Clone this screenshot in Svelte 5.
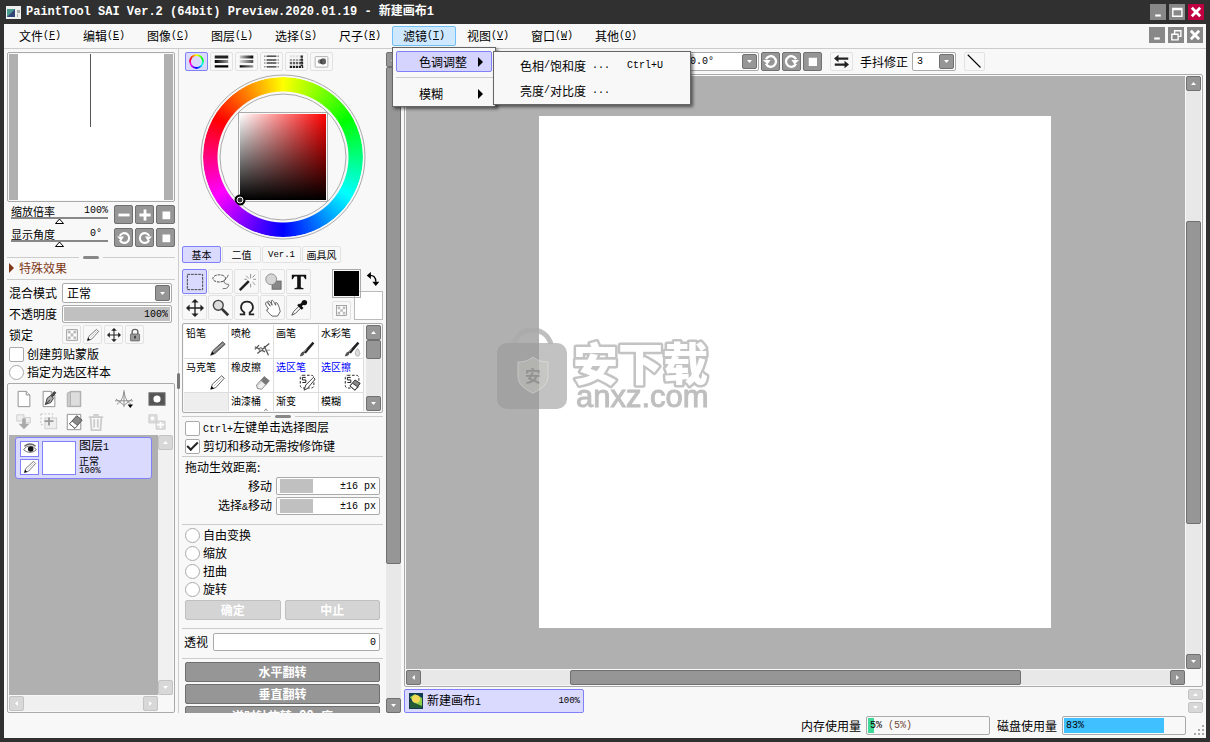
<script lang="ts">
	type Tool = { name: string; icon: string };

	const menus = [
		['文件', 'F'],
		['编辑', 'E'],
		['图像', 'C'],
		['图层', 'L'],
		['选择', 'S'],
		['尺子', 'R'],
		['滤镜', 'T'],
		['视图', 'V'],
		['窗口', 'W'],
		['其他', 'O']
	];
	const openMenu = '滤镜';

	const colorModes = ['wheel', 'bars', 'mixers', 'lines', 'dots', 'scratch'];
	const tabs = ['基本', '二值', 'Ver.1', '画具风'];
	const tools = ['marquee', 'lasso', 'wand', 'shape', 'text', 'move', 'zoom', 'rotate', 'hand', 'dropper'];
	const locks = ['checker', 'pencil', 'move', 'lock'];

	const brushes: Tool[] = [
		{ name: '铅笔', icon: 'crayon' },
		{ name: '喷枪', icon: 'airbrush' },
		{ name: '画笔', icon: 'brush' },
		{ name: '水彩笔', icon: 'watercolor' },
		{ name: '马克笔', icon: 'marker' },
		{ name: '橡皮擦', icon: 'eraser' },
		{ name: '选区笔', icon: 'selpen' },
		{ name: '选区擦', icon: 'seleraser' },
		{ name: '', icon: '' },
		{ name: '油漆桶', icon: 'bucket' },
		{ name: '渐变', icon: '' },
		{ name: '模糊', icon: 'drop' }
	];

	const transforms = ['自由变换', '缩放', '扭曲', '旋转'];
	const flips = ['水平翻转', '垂直翻转', '逆时针旋转 90 度'];

	// all icons are drawn on a 20x20 grid
	const selBox = '<rect x="1.5" y="1.5" width="16" height="15" rx="3" fill="none" stroke="#000" stroke-dasharray="3 2"/><path d="M8 4H4v3h4v3H4" fill="none" stroke="#000"/>';
	const pen = '<path d="M2 18l2-6L15 2l3 3L8 16z" fill="#fff" stroke="#444"/><path d="M2 18l1-4 3 3z"/><path d="M6 14l10-10" stroke="#bbb"/>';
	const ers = '<path d="M3 13L12 3l6 5-9 10-5-1z" fill="#eee" stroke="#777"/><path d="M8 8l4-5 6 5-4 5z" fill="#777"/><path d="M4 14l6-6" stroke="#bbb"/>';
	const page = '<path d="M3.500 1.500h9l4 4v13h-13z" fill="#fff" stroke="#888"/><path d="M12.500 1.500v4h4" fill="#eee" stroke="#888"/>';
	const brushShape = '<path d="M1 19c1-4 3-6 5-5 1 3-1 5-5 5z" fill="#555"/><path d="M5 14L16 2l2 2L8 16z" fill="#222"/><path d="M6 14l3-3" stroke="#aaa"/>';
	const icons: Record<string, string> = {
		wheel: '',
		bars: '<rect x="1" y="2" width="18" height="4" fill="#222"/><rect x="1" y="8" width="18" height="4" fill="url(#fade)"/><rect x="1" y="15" width="18" height="3" fill="#000"/>',
		mixers: '<rect x="1" y="2" width="18" height="4" fill="url(#unfade)"/><rect x="1" y="8" width="18" height="4" fill="url(#unfade)" opacity=".7"/><rect x="1" y="15" width="18" height="3" fill="url(#fade)"/>',
		lines: '<g stroke="#555" stroke-width="2"><path d="M0 3h20M0 8h20M0 12h20M0 17h20" stroke-dasharray="2 1" opacity=".6"/><path d="M4 3h12M4 8h12M4 12h12M4 17h12"/></g>',
		dots: '<g stroke="#222" stroke-width="3" stroke-dasharray="3 1"><path d="M1 3h18" opacity=".1"/><path d="M1 8h18" opacity=".4"/><path d="M1 12h18" opacity=".7"/><path d="M1 17h18"/><path d="M17 2v14"/></g>',
		scratch: '<rect x="1.500" y="3.500" width="17" height="14" rx="1" fill="#fff" stroke="#999"/><circle cx="8" cy="10" r="3" fill="#888"/><circle cx="12" cy="10" r="4" fill="#444"/><path d="M11 6h5v7h-5z" fill="#777" opacity=".5"/>',
		marquee: '<rect x="1.500" y="1.500" width="17" height="17" fill="none" stroke="#333" stroke-dasharray="3 1"/>',
		lasso: '<ellipse cx="8" cy="6" rx="7" ry="4" fill="none" stroke="#333" stroke-dasharray="3 1"/><path d="M18 2c-1 5-7 6-4 9s6 0 4 4-6 1-6 3" fill="none" stroke="#555"/>',
		wand: '<path d="M1 18L11 8l2 2L3 20z" fill="#222"/><path d="M14 1v5M14 12v4M7 7h3M17 7h3M9 3l3 3M19 2l-3 3M16 10l3 3" stroke="#888"/>',
		shape: '<rect x="9" y="9" width="10" height="9" fill="#888" stroke="#666"/><circle cx="8" cy="7" r="6" fill="#d5d5d5" stroke="#888"/>',
		text: '<path d="M2 2h16v5h-1l-2-3h-3v12l3 1v1H5v-1l3-1V4H5L3 7H2z" fill="#111"/>',
		move: '<path d="M10 2v16M2 10h16" stroke="#222" stroke-width="1.500"/><path d="M10 0l4 4H6zM10 20l4-4H6zM0 10l4-4v8zM20 10l-4-4v8z" fill="#222"/>',
		zoom: '<circle cx="7" cy="7" r="5.500" fill="#ddd" stroke="#444" stroke-width="1.500"/><path d="M11 11l7 7" stroke="#333" stroke-width="3"/>',
		rotate: '<path d="M2 17h5v-2C1 11 3 3 10 3s9 8 3 12v2h5" fill="none" stroke="#222" stroke-width="2"/>',
		hand: '<path d="M2 4c2-2 4 4 5 4L4 3c1-2 3 0 5 4L8 2c2-2 3 2 5 5V4c2-1 4 5 5 10l-3 5H9c-3-3-6-5-6-7l2-1c-2-3-4-5-3-7z" fill="#fff" stroke="#555"/>',
		dropper: '<path d="M2 18l2-4 7-7 2 2-7 7z" fill="#fff" stroke="#444"/><path d="M9 6l5 5M12 7l4-4" stroke="#111" stroke-width="3"/><circle cx="16" cy="4" r="3" fill="#111"/>',
		checker: '<rect x="2.500" y="2.500" width="15" height="15" fill="#fff" stroke="#777"/><path d="M4 4h4v4H4zM12 4h4v4h-4zM8 8h4v4H8zM4 12h4v4H4zM12 12h4v4h-4z" fill="#bbb"/>',
		pencil: pen,
		marker: pen,
		crayon: '<path d="M2 18l2-5L16 2l3 3L7 16z" fill="#777" stroke="#444"/><path d="M5 14L17 4" stroke="#ccc"/><path d="M2 18l2-4 2 2z" fill="#000"/>',
		lock: '<path d="M6 9V5c0-4 8-4 8 0v4" fill="none" stroke="#666" stroke-width="2"/><rect x="3.500" y="8.500" width="13" height="10" rx="1" fill="#999" stroke="#555"/><path d="M10 11v4" stroke="#222" stroke-width="2"/>',
		airbrush: '<path d="M1 8l12 6M4 16L18 4M1 11l5-5M12 7l5 11" fill="none" stroke="#555" stroke-width="1.500"/><circle cx="8" cy="11" r="2" fill="#ccc" stroke="#555"/><path d="M13 12h6" stroke="#888"/>',
		brush: brushShape,
		watercolor: brushShape + '<path d="M16 10c4 5 3 9 0 9s-4-4 0-9z" fill="#ddd" stroke="#aaa"/>',
		eraser: ers,
		selpen: selBox + '<path d="M6 19l2-6 9-9 2 2-9 11z" fill="#fff" stroke="#222"/>',
		seleraser: selBox + '<path d="M7 14l6-7 6 4-6 8z" fill="#888" stroke="#222"/><path d="M7 14l3-3 6 4-3 4z" fill="#fff" stroke="#222"/>',
		bucket: '<path d="M11 5l3-4 3 4" fill="none" stroke="#777"/>',
		drop: '<path d="M14 3l2 4h-4z" fill="#ccc"/>',
		newlayer: page,
		newpen: page + '<path d="M6 16l2-7 4-3 3 3-3 5z" fill="#aaa" stroke="#333"/><path d="M13 7l4-5" stroke="#444" stroke-width="3"/><path d="M6 16l5-5" stroke="#222"/>',
		folder: '<path d="M2.500 3.500l4-2h11v17h-15z" fill="#ccc" stroke="#aaa"/><path d="M6 2h11v16H6z" fill="#ddd" stroke="#aaa"/>',
		ruler: '<path d="M10 0v19M0 12h20M2 16C7 13 9 8 10 2c1 6 3 11 8 14M1 10l9 7 9-7" fill="none" stroke="#888"/><path d="M14 16h6l-3 4z"/>',
		mask: '<rect x="1" y="3" width="18" height="14" fill="#555" stroke="#777"/><circle cx="10" cy="10" r="4" fill="#fff"/>',
		merge: '<path d="M2 2h8v7H2zM10 5h7v6h-7z" fill="#eee" stroke="#ccc"/><path d="M8 6h4v6h4l-6 6-6-6h4z" fill="#aaa"/>',
		duplicate: '<rect x="1" y="1" width="13" height="12" fill="none" stroke="#bbb" stroke-dasharray="2 2"/><rect x="5.500" y="5.500" width="13" height="12" fill="#eee" stroke="#ccc"/><path d="M10 5v9M5 9h10" stroke="#999" stroke-width="2"/>',
		clear: '<path d="M2.500 1.500h15v17h-15z" fill="#fff" stroke="#888"/><path d="M5 12l8-9 6 5-8 9z" fill="#888" stroke="#444"/><path d="M5 12l3-3 6 5-3 3z" fill="#fff" stroke="#555"/>',
		trash: '<path d="M2 4.500h16M8 4V2h4v2M4 5l1 14h10l1-14M8 7v9M12 7v9" fill="none" stroke="#ccc" stroke-width="2"/>',
		addmask: '<path d="M1 2h9v9H1zM9 9h10v9H9z" fill="#ddd" stroke="#ccc"/><circle cx="5" cy="6" r="2" fill="#fff"/><path d="M14 10v7M10 13h8" stroke="#fff" stroke-width="2"/>',
		minus: '<path d="M2 10h16" stroke="#fff" stroke-width="4"/>',
		plus: '<path d="M2 10h16M10 2v16" stroke="#fff" stroke-width="4"/>',
		stop: '<rect x="5" y="5" width="11" height="11" fill="#fff"/>',
		ccw: '<path d="M4 13a7 7 0 1 0 0-6" fill="none" stroke="#fff" stroke-width="3"/><path d="M0 8h10l-4 6z" fill="#fff"/>',
		cw: '<path d="M16 13a7 7 0 1 1 0-6" fill="none" stroke="#fff" stroke-width="3"/><path d="M20 8H10l4 6z" fill="#fff"/>',
		swap: '<path d="M4 6h15M1 14h15" stroke="#222" stroke-width="3"/><path d="M0 6l6-5v10zM20 14l-6-5v10z" fill="#222"/>',
		line: '<path d="M1 1l17 17" stroke="#000" stroke-width="1.500"/>',
		eye: '<path d="M1 11c4-7 13-7 18 0-5 5-13 5-18 0z" fill="#fff" stroke="#333"/><circle cx="11" cy="10" r="4" fill="#111"/><path d="M2 6c5-4 11-4 16 0" fill="none" stroke="#666" stroke-width="2"/>',
		swapcolor: '<path d="M4 5c7-1 10 3 10 9" fill="none" stroke="#000" stroke-width="2"/><path d="M1 5l6-5v10zM14 20l-5-6h10z"/>',
		min: '<path d="M6 15h8" stroke="#fff" stroke-width="3"/>',
		max: '<path d="M4 5h13v11H4z" fill="none" stroke="#fff" stroke-width="2"/><path d="M4 6h13" stroke="#fff" stroke-width="3"/>',
		restore: '<path d="M8 8V4h9v8h-4M4 9h9v8H4z" fill="none" stroke="#fff" stroke-width="2"/>',
		close: '<path d="M4 4l12 12M16 4L4 16" stroke="#fff" stroke-width="4"/>',
		up: '<path d="M3 14l7-8 7 8z" fill="#fff"/>',
		down: '<path d="M3 6l7 8 7-8z" fill="#fff"/>',
		left: '<path d="M14 3l-8 7 8 7z" fill="#fff"/>',
		right: '<path d="M6 3l8 7-8 7z" fill="#fff"/>'
	};

	let tool = $state('marquee');
	let tab = $state('基本');
	let mode = $state('wheel');

	// ASCII runs are set in the narrow fixed-width face
	function runs(text: string) {
		return (text.match(/[\x20-\x7e]+|[^\x20-\x7e]+/g) ?? []).map((t) => ({
			t,
			latin: /^[\x20-\x7e]/.test(t)
		}));
	}
</script>

{#snippet icon(name: string)}
	<svg class="icon" viewBox="0 0 20 20" aria-hidden="true">{@html icons[name] ?? ''}</svg>
{/snippet}

{#snippet mixed(text: string)}
	{#each runs(text) as run}<span class:latin={run.latin}>{run.t}</span>{/each}
{/snippet}

{#snippet scrollbar(dir: string, before: number, thumb: number, after: number, disabled: boolean)}
	<div class="scroll {dir}" class:disabled>
		<button aria-label="scroll back" {disabled}>{@render icon(dir === 'vert' ? 'up' : 'left')}</button>
		<span style="flex-grow: {before}"></span>
		{#if thumb}<span class="thumb" style="flex-grow: {thumb}"></span>{/if}
		<span style="flex-grow: {after}"></span>
		<button aria-label="scroll forward" {disabled}>{@render icon(dir === 'vert' ? 'down' : 'right')}</button>
	</div>
{/snippet}

<svg class="defs" aria-hidden="true">
	<linearGradient id="fade"><stop offset="0" stop-color="#000" /><stop offset="1" stop-color="#999" /></linearGradient>
	<linearGradient id="unfade"><stop offset="0" stop-color="#ccc" /><stop offset="1" stop-color="#000" /></linearGradient>
</svg>

<div class="window">
	<header class="title">
		<svg class="app-icon" viewBox="0 0 15 13" aria-hidden="true">
			<rect width="15" height="13" fill="#eee" />
			<rect x="1" y="3" width="8" height="8" fill="#4a9a90" />
			<path d="M1 11l8-8v8z" fill="#347" />
			<path d="M11 4h3v3h-3zM11 8h1v3h-1z" fill="#aaa" />
		</svg>
		<h1>PaintTool SAI Ver.2 (64bit) Preview.2020.01.19 - 新建画布1</h1>
		<div class="win-buttons">
			<button aria-label="最小化">{@render icon('min')}</button>
			<button aria-label="最大化">{@render icon('max')}</button>
			<button class="quit" aria-label="关闭">{@render icon('close')}</button>
		</div>
	</header>

	<div class="client">
		<nav class="menubar">
			{#each menus as [name, key]}
				<div class="menu">
					<button class:open={name === openMenu}>{name}<span class="latin">(<u>{key}</u>)</span></button>
					{#if name === openMenu}
						<div class="dropdown">
							<button class="entry hot">色调调整<i class="arrow"></i></button>
							<hr />
							<button class="entry">模糊<i class="arrow"></i></button>
							<div class="submenu">
								<button>{@render mixed('色相/饱和度 ...')}<kbd>Ctrl+U</kbd></button>
								<button>{@render mixed('亮度/对比度 ...')}</button>
							</div>
						</div>
					{/if}
				</div>
			{/each}
			<div class="win-buttons">
				<button aria-label="最小化画布">{@render icon('min')}</button>
				<button aria-label="还原画布">{@render icon('restore')}</button>
				<button aria-label="关闭画布">{@render icon('close')}</button>
			</div>
		</nav>

		<div class="body">
			<aside class="layers-side">
				<div class="navigator"><div class="preview"><i></i></div></div>
				<div class="nav-row first">
					<label><span class="cap">缩放倍率<b>100%</b></span><input type="range" value="50" /></label>
					<button class="dark" aria-label="缩小">{@render icon('minus')}</button>
					<button class="dark" aria-label="放大">{@render icon('plus')}</button>
					<button class="dark" aria-label="重置">{@render icon('stop')}</button>
				</div>
				<div class="nav-row">
					<label><span class="cap">显示角度<b class="deg">0°</b></span><input type="range" value="50" /></label>
					<button class="dark" aria-label="左旋">{@render icon('ccw')}</button>
					<button class="dark" aria-label="右旋">{@render icon('cw')}</button>
					<button class="dark" aria-label="重置角度">{@render icon('stop')}</button>
				</div>
				<div class="splitter"><i></i></div>
				<button class="effects"><i></i>特殊效果</button>
				<div class="props">
					<div class="prop">
						<label for="blend">混合模式</label>
						<div class="combo grow">
							<select id="blend"><option>正常</option></select>
							<span>{@render icon('down')}</span>
						</div>
					</div>
					<div class="prop">
						<label for="opacity">不透明度</label>
						<input id="opacity" class="bar full" value="100%" />
					</div>
					<div class="prop locks">
						<span>锁定</span>
						{#each locks as name}
							<button class="flat" aria-label={name}>{@render icon(name)}</button>
						{/each}
					</div>
					<label class="tick"><input type="checkbox" />创建剪贴蒙版</label>
					<label class="tick"><input type="radio" name="sample" />指定为选区样本</label>
				</div>
				<section class="layers">
					<div class="layer-tools">
						{#each ['newlayer', 'newpen', 'folder', '', 'ruler', 'mask', 'merge', 'duplicate', 'clear', 'trash', '', 'addmask'] as name}
							{#if name}
								<button aria-label={name}>{@render icon(name)}</button>
							{:else}
								<span></span>
							{/if}
						{/each}
					</div>
					<div class="layer-list">
						<div class="layer">
							<div class="marks">
								<button aria-label="显示">{@render icon('eye')}</button>
								<button aria-label="编辑">{@render icon('pencil')}</button>
							</div>
							<div class="thumbnail"></div>
							<div class="layer-text">
								<strong>{@render mixed('图层1')}</strong>
								<span>正常</span>
								<span class="tiny">100%</span>
							</div>
						</div>
					</div>
					{@render scrollbar('vert', 1, 0, 1, true)}
					{@render scrollbar('horz', 1, 0, 1, true)}
				</section>
			</aside>

			<div class="grab"><i></i></div>

			<aside class="tools-side">
				<div class="tools">
					<div class="modes">
						{#each colorModes as name}
							<button class="flat" class:on={mode === name} aria-label={name} onclick={() => (mode = name)}>
								{#if name === 'wheel'}<i class="mini-wheel"></i>{:else}{@render icon(name)}{/if}
							</button>
						{/each}
					</div>

					<div class="wheel">
						<div class="ring"></div>
						<div class="shade"></div>
						<svg viewBox="0 0 166 166" aria-hidden="true">
							<circle cx="83" cy="83" r="82" fill="none" stroke="#aaa" />
							<circle cx="83" cy="83" r="63" fill="none" stroke="#aaa" />
							<circle cx="20" cy="47" r="4" fill="none" stroke="#2bd8e8" stroke-width="2" />
							<circle cx="40" cy="126" r="4" fill="none" stroke="#000" stroke-width="3" />
							<circle cx="40" cy="126" r="3" fill="#333" stroke="#fff" />
						</svg>
					</div>

					<div class="tabs">
						{#each tabs as name}
							<button class="flat" class:on={tab === name} onclick={() => (tab = name)}>{@render mixed(name)}</button>
						{/each}
					</div>

					<div class="toolbox">
						<div class="tool-grid">
							{#each tools as name}
								<button class="flat" class:on={tool === name} aria-label={name} onclick={() => (tool = name)}>{@render icon(name)}</button>
							{/each}
						</div>
						<div class="colors">
							<button class="second" aria-label="背景色"></button>
							<button class="first" aria-label="前景色"></button>
							<button class="swap" aria-label="交换">{@render icon('swapcolor')}</button>
							<button class="flat clear" aria-label="透明">{@render icon('checker')}</button>
						</div>
					</div>

					<div class="brushes">
						<div class="brush-grid">
							{#each brushes as b}
								<button class:empty={!b.name} class:blue={b.name.startsWith('选区')}>
									<span>{b.name}</span>{@render icon(b.icon)}
								</button>
							{/each}
						</div>
						{@render scrollbar('vert', 0, 17, 38, false)}
					</div>
					<div class="splitter"><i></i></div>

					<div class="options picks">
						<label class="tick"><input type="checkbox" /><span>{@render mixed('Ctrl+左键单击选择图层')}</span></label>
						<label class="tick"><input type="checkbox" checked />剪切和移动无需按修饰键</label>
					</div>
					<div class="options drag">
						<p>拖动生效距离:</p>
						<div class="drag-row"><label for="mv">移动</label><input id="mv" class="bar" value="±16 px" /></div>
						<div class="drag-row"><label for="smv">{@render mixed('选择&移动')}</label><input id="smv" class="bar" value="±16 px" /></div>
					</div>
					<div class="options morph">
						{#each transforms as name}
							<label class="tick"><input type="radio" name="transform" />{name}</label>
						{/each}
						<div class="pair">
							<button class="dark wide" disabled>确定</button>
							<button class="dark wide" disabled>中止</button>
						</div>
					</div>
					<div class="options persp">
						<label for="persp">透视</label>
						<input id="persp" class="bar plain" value="0" />
					</div>
					<div class="options flips">
						{#each flips as name}
							<button class="dark wide">{@render mixed(name)}</button>
						{/each}
					</div>
				</div>
				{@render scrollbar('vert', 0, 495, 134, false)}
			</aside>

			<main class="work">
				<div class="view-bar">
					<div class="combo angle">
						<select aria-label="角度"><option>0.0°</option></select>
						<span>{@render icon('down')}</span>
					</div>
					<button class="dark" aria-label="左旋视图">{@render icon('ccw')}</button>
					<button class="dark" aria-label="右旋视图">{@render icon('cw')}</button>
					<button class="dark" aria-label="重置视图">{@render icon('stop')}</button>
					<button class="flat flip" aria-label="水平翻转视图">{@render icon('swap')}</button>
					<label for="stab">手抖修正</label>
					<div class="combo stab">
						<select id="stab"><option>3</option></select>
						<span>{@render icon('down')}</span>
					</div>
					<button class="flat ruler-line" aria-label="直线">{@render icon('line')}</button>
				</div>
				<div class="view">
					<div class="viewport">
						<div class="canvas"></div>
						<svg class="mark" viewBox="0 0 214 84" role="img" aria-label="安下载 anxz.com">
							<g opacity=".75">
								<path d="M17 16c5-19 31-19 37 0" fill="none" stroke="#aaa" stroke-width="5" />
								<rect x="0" y="15" width="70" height="66" rx="10" fill="#999" fill-opacity=".8" />
								<path d="M36 29c5 4 10 5 15 5v14c0 8-6 13-15 17-9-4-15-9-15-17V34c5 0 10-1 15-5z" fill="#b4b4b0" stroke="#ccc" />
								<text x="28" y="54" class="mark-seal">安</text>
								<text x="76" y="53" class="mark-cn">安下载</text>
								<text x="79" y="79" class="mark-en">anxz.com</text>
							</g>
						</svg>
					</div>
					{@render scrollbar('vert', 130, 301, 130, false)}
					{@render scrollbar('horz', 149, 450, 149, false)}
				</div>
				<div class="docs">
					<button class="doc">
						<svg viewBox="0 0 14 16" aria-hidden="true">
							<rect width="14" height="16" fill="#123a50" />
							<path d="M1 4l5-3 7 4v8l-6 1z" fill="#8ed04a" />
							<circle cx="7" cy="6" r="4" fill="#f4d858" />
							<path d="M1 8l12 5v2H1z" fill="#245a35" />
						</svg>
						<span>{@render mixed('新建画布1')}</span><em class="tiny">100%</em>
					</button>
					<div class="doc-scroll">
						<button aria-label="上一行" disabled>{@render icon('up')}</button>
						<button aria-label="下一行" disabled>{@render icon('down')}</button>
					</div>
				</div>
			</main>
		</div>

		<footer class="status">
			<span>内存使用量</span>
			<div class="gauge"><i class="mem" style="width: 5%"></i><span>5% <em>(5%)</em></span></div>
			<span>磁盘使用量</span>
			<div class="gauge"><i class="disk" style="width: 83%"></i><span>83%</span></div>
			<svg class="grip" viewBox="0 0 10 10" aria-hidden="true">
				<path d="M8 0h2v2H8zM4 4h2v2H4zM8 4h2v2H8zM0 8h2v2H0zM4 8h2v2H4zM8 8h2v2H8z" fill="#aaa" />
			</svg>
		</footer>
	</div>
</div>

<style>
	:global(body) {
		margin: 0;
		background: #303030;
	}

	.window,
	.window * {
		box-sizing: border-box;
	}

	.window {
		--line: #aaa;
		--dark: #969696;
		display: flex;
		flex-direction: column;
		height: 100vh;
		min-height: 600px;
		padding: 0 4px 4px;
		background: #303030;
		color: #000;
		font: 12px/16px 'Noto Sans CJK SC', sans-serif;
	}

	button,
	input,
	select {
		margin: 0;
		padding: 0;
		border: 0;
		background: none;
		color: inherit;
		font: inherit;
		border-radius: 0;
	}

	button {
		display: flex;
		align-items: center;
		justify-content: center;
		white-space: nowrap;
	}

	hr,
	p {
		margin: 0;
	}

	.defs {
		position: absolute;
		width: 0;
		height: 0;
	}

	.icon {
		display: block;
		width: 14px;
		height: 14px;
		flex: none;
	}

	.latin,
	kbd {
		font: 10px/16px 'Liberation Mono', monospace;
		white-space: pre;
	}

	.tiny {
		font: 9px/11px 'Liberation Mono', monospace;
	}

	.title {
		display: flex;
		align-items: center;
		flex: none;
		height: 24px;
		padding: 0 2px;
		gap: 5px;
		color: #fff;
	}

	.title h1 {
		margin: 0;
		flex: 1;
		font: bold 12px/24px 'Liberation Mono', 'Noto Sans CJK SC', monospace;
		white-space: nowrap;
	}

	.app-icon {
		width: 15px;
		height: 13px;
	}

	.win-buttons {
		display: flex;
		gap: 3px;
		margin-left: auto;
	}

	.win-buttons button {
		width: 16px;
		height: 16px;
		background: #888;
	}

	.win-buttons .quit {
		background: #c00040;
	}

	.client {
		display: flex;
		flex-direction: column;
		flex: 1;
		min-height: 0;
		background: #f8f8f8;
	}

	.menubar {
		display: flex;
		flex: none;
		height: 25px;
		padding: 2px 3px 2px 4px;
		border-bottom: 1px solid #ccc;
	}

	.menu {
		position: relative;
	}

	.menu > button {
		width: 64px;
		height: 20px;
		border: 1px solid transparent;
		border-radius: 2px;
	}

	.menu > .open {
		background: #cde8ff;
		border-color: #70c0f8;
	}

	.menubar .win-buttons {
		padding-top: 1px;
	}

	.dropdown {
		position: absolute;
		z-index: 5;
		top: 21px;
		left: 0;
		width: 104px;
		padding: 3px 2px 2px 3px;
		border: 1px solid #666;
		background: #f8f8f8;
		box-shadow: 2px 2px 3px #0008;
	}

	.entry {
		width: 96px;
		height: 21px;
		padding: 0 8px 0 22px;
		justify-content: space-between;
		border: 1px solid transparent;
		border-radius: 2px;
	}

	.entry.hot {
		background: #d4d4ff;
		border-color: #8080f8;
	}

	.dropdown hr {
		margin: 5px 0;
		border: 0;
		border-top: 1px solid #ccc;
	}

	.arrow {
		border-left: 5px solid #000;
		border-top: 5px solid transparent;
		border-bottom: 5px solid transparent;
	}

	.submenu {
		position: absolute;
		top: 3px;
		left: 100px;
		width: 198px;
		padding: 1px;
		border: 1px solid #666;
		background: #f8f8f8;
		box-shadow: 2px 2px 3px #0008;
	}

	.submenu button {
		justify-content: flex-start;
		width: 100%;
		height: 25px;
		padding-left: 25px;
	}

	kbd {
		margin-left: auto;
		padding-right: 26px;
	}

	.body {
		display: flex;
		flex: 1;
		min-height: 0;
	}

	.layers-side {
		display: flex;
		flex-direction: column;
		width: 171px;
		flex: none;
		padding: 3px 0 0 3px;
	}

	.navigator {
		flex: none;
		height: 150px;
		padding: 1px;
		border: 1px solid var(--line);
		border-radius: 2px;
	}

	.preview {
		height: 100%;
		border: solid #b0b0b0;
		border-width: 0 9px;
		background: #fff;
	}

	.preview i {
		display: block;
		width: 50%;
		height: 73px;
		border-right: 1px solid #555;
	}

	.nav-row {
		display: flex;
		gap: 2px;
		flex: none;
		height: 19px;
		margin-bottom: 4px;
		padding-left: 4px;
	}

	.nav-row.first {
		margin-top: 3px;
	}

	.nav-row label {
		flex: 1;
		padding-right: 4px;
		font-size: 11px;
		line-height: 12px;
	}

	.cap {
		display: flex;
		justify-content: space-between;
	}

	.cap b {
		font: 10px/12px 'Liberation Mono', monospace;
	}

	.cap .deg {
		padding-right: 6px;
	}

	.nav-row input {
		display: block;
		width: 100%;
		height: 8px;
		appearance: none;
	}

	.nav-row input::-webkit-slider-runnable-track {
		height: 2px;
		margin-bottom: 6px;
		background: #888;
	}

	.nav-row input::-webkit-slider-thumb {
		appearance: none;
		width: 9px;
		height: 6px;
		margin-top: 1px;
		background: url("data:image/svg+xml,%3Csvg xmlns='http://www.w3.org/2000/svg' viewBox='0 0 9 6'%3E%3Cpath d='M.5 5.500L4.500 1l4 4.500z' fill='white' stroke='black'/%3E%3C/svg%3E");
	}

	.dark {
		flex: none;
		width: 19px;
		height: 19px;
		border: 1px solid #707070;
		border-radius: 2px;
		background: var(--dark);
		color: #fff;
	}

	.dark.wide {
		width: 100%;
		height: 20px;
		flex: none;
		font-weight: bold;
	}

	.dark:disabled {
		background: #d4d4d4;
		border-color: #c0c0c0;
	}

	.flat {
		border: 1px solid #e2e2e2;
		border-radius: 2px;
		background: #f8f8f8;
	}

	.flat.on {
		border-color: #8080f8;
		background: #dadaff;
	}

	.splitter {
		display: flex;
		align-items: center;
		justify-content: center;
		gap: 4px;
		flex: none;
		height: 9px;
	}

	.splitter::before,
	.splitter::after {
		content: '';
		flex: 1;
		height: 1px;
		background: #ccc;
	}

	.splitter i {
		width: 16px;
		height: 3px;
		border-radius: 2px;
		background: #888;
	}

	.layers-side > .splitter {
		margin-top: 2px;
	}

	.tools > .splitter {
		height: 5px;
		margin-top: 1px;
	}

	.effects {
		justify-content: flex-start;
		gap: 5px;
		flex: none;
		height: 18px;
		padding: 0 0 5px 2px;
		border-bottom: 1px solid #ccc;
		color: #803818;
	}

	.effects i {
		border-left: 5px solid #803818;
		border-top: 5px solid transparent;
		border-bottom: 5px solid transparent;
	}

	.props {
		display: flex;
		flex-direction: column;
		flex: none;
		gap: 2px;
		padding: 3px 3px 3px 2px;
	}

	.prop {
		display: flex;
		align-items: center;
		gap: 2px;
	}

	.prop > label,
	.prop > span {
		width: 51px;
		flex: none;
	}

	.prop > label + * {
		flex: 1;
		min-width: 0;
	}

	.locks .flat {
		width: 19px;
		height: 19px;
	}

	.combo {
		display: flex;
		height: 20px;
		padding: 1px;
		border: 1px solid var(--line);
		border-radius: 2px;
		background: #fff;
	}

	.combo select {
		flex: 1;
		min-width: 0;
		padding-left: 3px;
		appearance: none;
	}

	.combo span {
		display: flex;
		align-items: center;
		justify-content: center;
		width: 15px;
		flex: none;
		border: 1px solid #707070;
		border-radius: 2px;
		background: var(--dark);
	}

	.combo span .icon {
		width: 7px;
		height: 7px;
	}

	.bar {
		width: 104px;
		height: 18px;
		padding: 0 3px;
		border: 1px solid var(--line);
		border-radius: 2px;
		background: linear-gradient(90deg, #c0c0c0 33px, #fff 0) content-box #fff;
		box-shadow: inset 0 0 0 1px #fff;
		font: 10px/16px 'Liberation Mono', monospace;
		text-align: right;
	}

	.bar.full {
		background: #c0c0c0;
	}

	.bar.plain {
		background: #fff;
	}

	.tick {
		display: flex;
		align-items: center;
		gap: 3px;
		height: 16px;
		white-space: nowrap;
	}

	.tick input {
		display: grid;
		place-items: center;
		flex: none;
		width: 15px;
		height: 15px;
		border: 1px solid var(--line);
		border-radius: 2px;
		background: #fff;
		appearance: none;
	}

	.tick input[type='radio'] {
		border-radius: 50%;
	}

	.tick input:checked::before {
		content: '';
		width: 9px;
		height: 4px;
		margin-bottom: 3px;
		border: solid #222;
		border-width: 0 0 2px 2px;
		transform: rotate(-45deg);
	}

	.layers {
		display: grid;
		grid-template: auto 1fr 16px / 1fr 15px;
		flex: 1;
		min-height: 0;
		padding: 1px;
		border: 1px solid var(--line);
		border-radius: 2px;
	}

	.layer-tools {
		grid-column: 1 / 3;
		display: grid;
		grid-template-columns: 25px 25px 25px 20px 36px 1fr;
		grid-auto-rows: 23px;
		padding: 2px;
	}

	.layer-tools .icon {
		width: 18px;
		height: 18px;
	}

	.layer-list {
		padding: 2px 6px;
		background: #b0b0b0;
	}

	.layer {
		display: flex;
		gap: 3px;
		height: 42px;
		padding: 3px 4px;
		border: 1px solid #8080f8;
		border-radius: 3px;
		background: #dadaff;
	}

	.marks {
		display: flex;
		flex-direction: column;
		gap: 2px;
	}

	.marks button {
		width: 19px;
		height: 16px;
		border: 1px solid #8080f8;
		background: #fff;
	}

	.thumbnail {
		width: 34px;
		height: 34px;
		border: 1px solid #8080f8;
		background: #fff;
	}

	.layer-text {
		display: flex;
		flex-direction: column;
		margin-top: -3px;
		font-size: 10px;
		line-height: 11px;
	}

	.layer-text strong {
		font-size: 12px;
		line-height: 14px;
		font-weight: normal;
	}

	.layer-text .latin {
		line-height: 14px;
	}

	.scroll {
		display: flex;
		flex: none;
		background: #e8e8e8;
	}

	.scroll > span {
		flex-basis: 0;
	}

	.scroll.vert {
		flex-direction: column;
		width: 15px;
	}

	.scroll.horz {
		height: 15px;
	}

	.scroll button,
	.doc-scroll button {
		width: 15px;
		height: 15px;
		flex: none;
		border: 1px solid #707070;
		border-radius: 2px;
		background: var(--dark);
	}

	.scroll .thumb {
		border: 1px solid #707070;
		border-radius: 2px;
		background: var(--dark);
	}

	.scroll .icon,
	.doc-scroll .icon {
		width: 7px;
		height: 7px;
	}

	.scroll.disabled {
		background: #f0f0f0;
	}

	.scroll button:disabled,
	.doc-scroll button:disabled {
		border-color: #c4c4c4;
		background: #d8d8d8;
	}

	.layers .horz {
		margin-top: 1px;
	}

	.grab {
		display: flex;
		align-items: center;
		flex: none;
		width: 5px;
		margin-right: 2px;
		background: linear-gradient(#ccc, #ccc) 3px 0 / 1px 100% no-repeat;
	}

	.grab i {
		width: 3px;
		height: 16px;
		margin-left: 2px;
		border-radius: 2px;
		background: #777;
	}

	.tools-side {
		display: flex;
		flex: none;
		width: 219px;
		padding-top: 3px;
		gap: 3px;
	}

	.tools {
		flex: 1;
		min-width: 0;
		overflow: hidden;
	}

	.modes {
		display: flex;
		gap: 2px;
		padding-left: 3px;
	}

	.modes .flat {
		width: 23px;
		height: 19px;
	}

	.modes .icon {
		width: 17px;
		height: 15px;
	}

	.mini-wheel {
		width: 15px;
		height: 15px;
		border-radius: 50%;
		background: conic-gradient(#ff0, #0f0, #0ff, #00f, #f0f, #f00, #ff0);
		mask: radial-gradient(circle, #0000 5px, #000 6px);
	}

	.wheel {
		display: grid;
		width: 166px;
		height: 166px;
		margin: 3px auto 6px;
	}

	.wheel > * {
		grid-area: 1 / 1;
		place-self: center;
	}

	.ring {
		width: 160px;
		height: 160px;
		border-radius: 50%;
		background: conic-gradient(#ff0, #0f0, #0ff, #00f, #f0f, #f00, #ff0);
		mask: radial-gradient(circle, #0000 65px, #000 66px);
	}

	.shade {
		width: 90px;
		height: 90px;
		padding: 1px;
		border: 1px solid var(--line);
		background:
			linear-gradient(#0000, #000) content-box,
			linear-gradient(90deg, #fff, #f00) content-box #fff;
	}

	.wheel svg {
		width: 166px;
		height: 166px;
	}

	.tabs {
		display: flex;
		gap: 1px;
		font-size: 10px;
	}

	.tabs .flat {
		width: 39px;
		height: 17px;
	}

	.tabs .latin {
		font-size: 9px;
	}

	.toolbox {
		display: flex;
		justify-content: space-between;
		margin: 6px 0 3px;
	}

	.tool-grid {
		display: grid;
		grid-template-columns: repeat(5, 25px);
		grid-auto-rows: 25px;
		gap: 1px;
	}

	.tool-grid .icon {
		width: 18px;
		height: 18px;
	}

	.colors {
		position: relative;
		width: 51px;
		height: 51px;
	}

	.colors button {
		position: absolute;
	}

	.colors .first {
		top: 0;
		left: 0;
		width: 29px;
		height: 29px;
		border: 1px solid var(--line);
		background: #000;
		background-clip: content-box;
		padding: 1px;
	}

	.colors .second {
		right: 0;
		bottom: 0;
		width: 29px;
		height: 29px;
		border: 1px solid #bbb;
		background: #fff;
	}

	.colors .swap {
		top: 3px;
		right: 3px;
	}

	.colors .clear {
		bottom: 0;
		left: 0;
		width: 19px;
		height: 19px;
	}

	.colors .clear .icon {
		width: 13px;
		height: 13px;
	}

	.brushes {
		display: flex;
		height: 90px;
		padding: 1px;
		gap: 2px;
		border: 1px solid var(--line);
		border-radius: 2px;
	}

	.brush-grid {
		display: grid;
		grid-template-columns: repeat(4, 1fr);
		grid-auto-rows: 34px;
		flex: 1;
		overflow: hidden;
	}

	.brush-grid button {
		flex-direction: column;
		align-items: flex-start;
		justify-content: flex-start;
		overflow: hidden;
		border: solid #ddd;
		border-width: 0 1px 1px 0;
		padding-left: 2px;
		background: #fff;
		font-size: 10px;
		line-height: 15px;
	}

	.brush-grid .icon {
		width: 17px;
		height: 17px;
		margin: 0 2px 0 auto;
	}

	.brush-grid .empty {
		background: #eee;
	}

	.brush-grid .blue {
		color: #00f;
	}

	.options {
		padding: 1px 3px;
		border-bottom: 1px solid #ccc;
	}

	.options .tick {
		height: 18px;
	}

	.picks {
		padding: 0 3px 1px;
	}

	.drag {
		padding-bottom: 8px;
	}

	.drag p {
		line-height: 18px;
	}

	.drag-row {
		display: flex;
		align-items: center;
		justify-content: flex-end;
		gap: 4px;
		height: 20px;
	}

	.pair {
		display: flex;
		gap: 4px;
		padding: 2px 0 7px;
	}

	.pair .wide {
		flex: 1;
	}

	.persp {
		display: flex;
		align-items: center;
		gap: 5px;
		height: 30px;
		padding: 4px 3px 7px 2px;
	}

	.persp input {
		flex: 1;
	}

	.flips {
		display: flex;
		flex-direction: column;
		gap: 2px;
		padding-top: 3px;
		border: 0;
	}

	.flips .latin {
		font-size: 12px;
		font-weight: bold;
	}

	.work {
		display: flex;
		flex-direction: column;
		flex: 1;
		min-width: 0;
		padding: 3px 3px 0;
	}

	.view-bar {
		display: flex;
		align-items: center;
		gap: 2px;
		flex: none;
		height: 19px;
		padding-left: 246px;
	}

	.view-bar .icon {
		width: 15px;
		height: 15px;
	}

	.view-bar .combo {
		height: 19px;
	}

	.view-bar .combo .icon {
		width: 7px;
		height: 7px;
	}

	.view-bar select {
		font: 10px/16px 'Liberation Mono', monospace;
	}

	.angle {
		width: 109px;
	}

	.angle select {
		padding-left: 38px;
	}

	.flip {
		width: 23px;
		height: 19px;
		margin: 0 5px 0 6px;
	}

	.stab {
		width: 44px;
		margin-left: 2px;
	}

	.ruler-line {
		width: 21px;
		height: 19px;
		margin-left: 6px;
	}

	.view {
		display: grid;
		grid-template: 1fr 16px / 1fr 16px;
		flex: 1;
		min-height: 0;
		margin-top: 3px;
		padding: 1px;
		border: 1px solid var(--line);
		border-radius: 2px;
	}

	.view .vert {
		margin-left: 1px;
	}

	.view .horz {
		margin-top: 1px;
	}

	.viewport {
		position: relative;
		display: flex;
		align-items: center;
		justify-content: center;
		min-height: 0;
		padding: 0 1px 1px 0;
		overflow: hidden;
		background: #b0b0b0;
	}

	.canvas {
		flex: none;
		width: 512px;
		height: 512px;
		background: #fff;
	}

	.mark {
		position: absolute;
		top: 252px;
		left: 91px;
		width: 214px;
		height: 84px;
	}

	.mark-cn {
		font: 900 45px 'Noto Sans CJK SC', sans-serif;
		fill: #fff;
		stroke: #b0b0b0;
		stroke-width: 5px;
		stroke-linejoin: round;
		paint-order: stroke;
	}

	.mark-en {
		font: 31px 'Liberation Sans', sans-serif;
		fill: #aaa;
		stroke: #aaa;
	}

	.mark-seal {
		font: bold 16px 'Noto Sans CJK SC', sans-serif;
		fill: #888;
	}

	.docs {
		display: flex;
		justify-content: space-between;
		flex: none;
		height: 26px;
		padding-top: 2px;
	}

	.doc {
		width: 180px;
		padding: 0 3px 0 4px;
		gap: 4px;
		border: 1px solid #8080f8;
		border-radius: 2px;
		background: #dadaff;
	}

	.doc svg {
		width: 14px;
		height: 16px;
	}

	.doc em {
		margin-left: auto;
		font-style: normal;
	}

	.doc-scroll {
		display: flex;
		flex-direction: column;
		gap: 2px;
	}

	.doc-scroll button {
		height: 11px;
	}

	.status {
		display: flex;
		align-items: center;
		justify-content: flex-end;
		gap: 5px;
		flex: none;
		height: 25px;
		padding-right: 2px;
	}

	.gauge {
		display: grid;
		width: 124px;
		height: 19px;
		padding: 1px;
		border: 1px solid var(--line);
		border-radius: 2px;
	}

	.gauge + span {
		margin-left: 2px;
	}

	.gauge > * {
		grid-area: 1 / 1;
	}

	.gauge span {
		padding-left: 2px;
		font: 10px/15px 'Liberation Mono', monospace;
	}

	.gauge em {
		color: #704838;
		font-style: normal;
	}

	.mem {
		background: #40d898;
	}

	.disk {
		background: #40c0ff;
	}

	.grip {
		width: 10px;
		height: 10px;
		margin: 9px 0 0 3px;
	}
</style>
